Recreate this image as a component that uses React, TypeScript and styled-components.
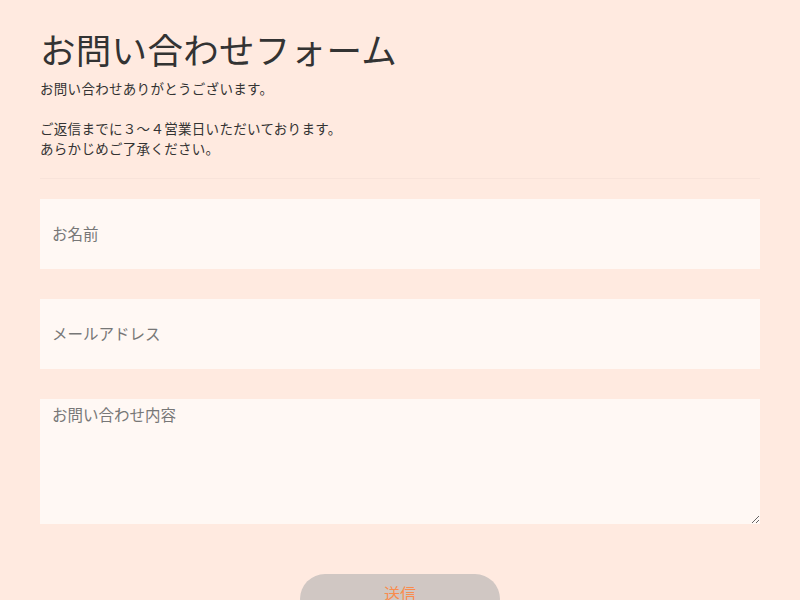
import React from 'react';
import styled, { createGlobalStyle } from 'styled-components';

const GlobalStyle = createGlobalStyle`
  html, body {
    margin: 0;
    padding: 0;
    background: #ffeae0;
  }
  body {
    font-family: "Noto Sans CJK JP", "Noto Sans", sans-serif;
    color: #333;
  }
`;

function App() {
  return (
    <>
      <GlobalStyle />
      <Page>
        <Title>お問い合わせフォーム</Title>
        <Lead>
          お問い合わせありがとうございます。
          <br />
          <br />
          ご返信までに３～４営業日いただいております。
          <br />
          あらかじめご了承ください。
        </Lead>
        <Divider />
        <Form onSubmit={e => e.preventDefault()}>
          <Field type="text" placeholder="お名前" />
          <Field type="email" placeholder="メールアドレス" />
          <Message placeholder="お問い合わせ内容" />
          <SubmitRow>
            <SubmitButton type="submit">送信</SubmitButton>
          </SubmitRow>
        </Form>
      </Page>
    </>
  );
}

const Page = styled.div`
  padding: 26px 40px 0;
`;

const Title = styled.h1`
  margin: 0;
  font-size: 35.5px;
  font-weight: 400;
  line-height: 46px;
  letter-spacing: 0.3px;
  color: #333;
`;

const Lead = styled.p`
  margin: 6px 0 0;
  font-size: 13.5px;
  line-height: 20px;
  letter-spacing: 0.3px;
`;

const Divider = styled.hr`
  margin: 20px 0 0;
  border: 0;
  border-top: 1px solid #f8e3da;
`;

const Form = styled.form`
  display: flex;
  flex-direction: column;
  gap: 30px;
  margin-top: 20px;
`;

const fieldBase = `
  box-sizing: border-box;
  width: 100%;
  border: 0;
  outline: 0;
  background: #fff8f4;
  font-family: "Noto Sans CJK JP", "Noto Sans", sans-serif;
  font-size: 15.5px;
  color: #333;
  padding: 0 12px;
  &::placeholder {
    color: #777;
  }
`;

const Field = styled.input`
  ${fieldBase}
  height: 70px;
  padding-bottom: 3px;
`;

const Message = styled.textarea`
  ${fieldBase}
  height: 125px;
  padding-top: 4px;
  resize: both;
  display: block;
`;

const SubmitRow = styled.div`
  display: flex;
  justify-content: center;
  padding-top: 20px;
`;

const SubmitButton = styled.button`
  width: 200px;
  height: 50px;
  border: 0;
  border-radius: 25px;
  padding: 0 0 12px;
  background: #d0c7c3;
  color: #f98c4e;
  font-family: "Noto Sans CJK JP", "Noto Sans", sans-serif;
  font-size: 16px;
  cursor: pointer;
`;

export default App;
